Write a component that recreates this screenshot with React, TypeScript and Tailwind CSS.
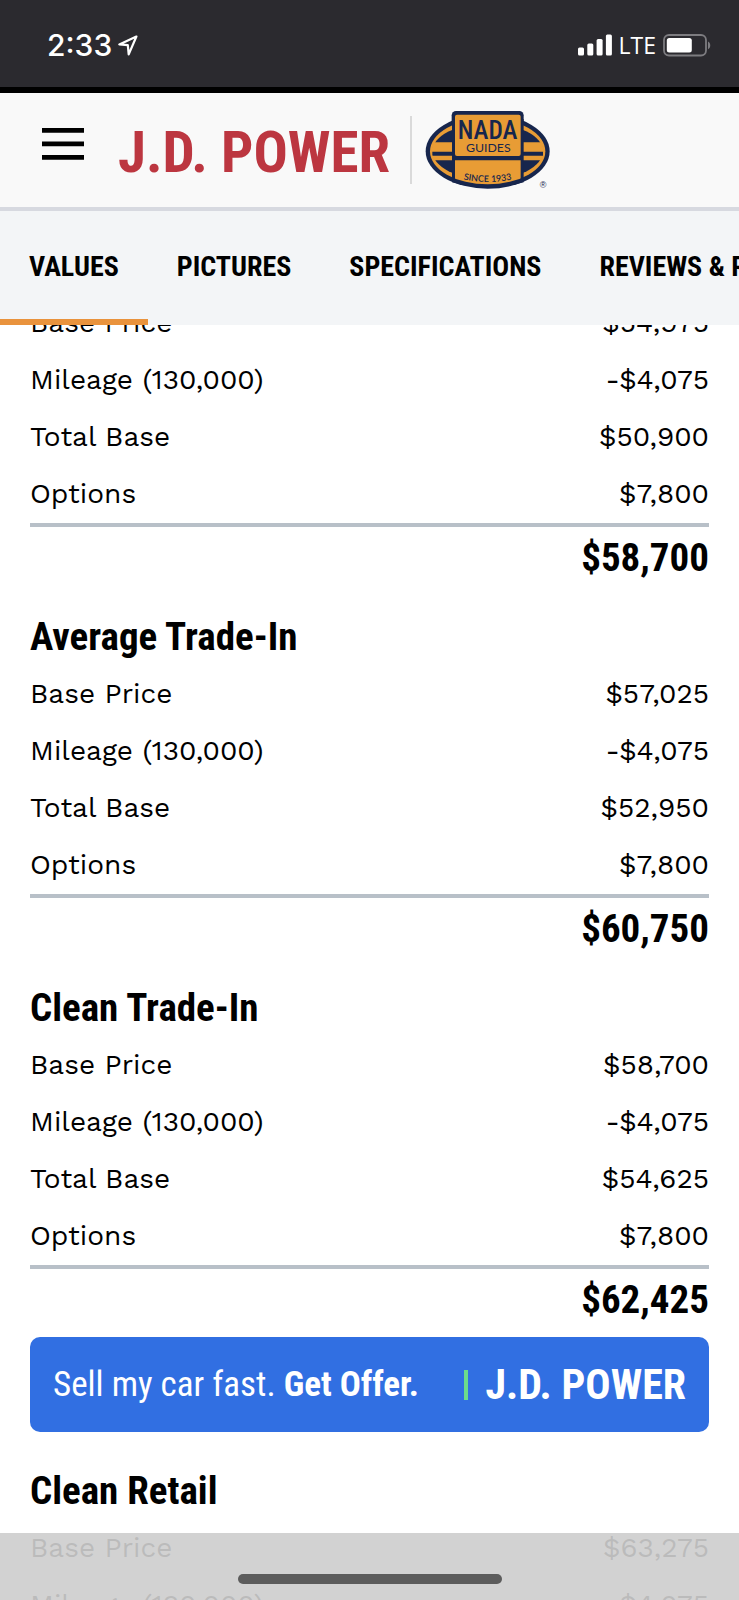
type Item = [label: string, value: string];
type Group = { title: string; items: Item[]; total: string };

const rough: Group = {
  title: '',
  items: [['Base Price', '$54,975'], ['Mileage (130,000)', '-$4,075'], ['Total Base', '$50,900'], ['Options', '$7,800']],
  total: '$58,700',
};
const average: Group = {
  title: 'Average Trade-In',
  items: [['Base Price', '$57,025'], ['Mileage (130,000)', '-$4,075'], ['Total Base', '$52,950'], ['Options', '$7,800']],
  total: '$60,750',
};
const clean: Group = {
  title: 'Clean Trade-In',
  items: [['Base Price', '$58,700'], ['Mileage (130,000)', '-$4,075'], ['Total Base', '$54,625'], ['Options', '$7,800']],
  total: '$62,425',
};
const retail: Group = {
  title: 'Clean Retail',
  items: [['Base Price', '$63,275'], ['Mileage (130,000)', '-$4,075']],
  total: '',
};

function StatusBar() {
  return (
    <div className="flex h-[93px] shrink-0 items-center justify-between border-b-6 border-black bg-[#2b2a2f] pr-[28px] pl-[47px] pt-[3px] text-white">
      <div className="flex items-center gap-[6px]">
        <span className="font-[Inter,sans-serif] text-[30px] leading-none font-medium">2:33</span>
        <svg width="20" height="21" viewBox="0 0 20 21" fill="none" stroke="#fff" strokeWidth="2.2" strokeLinejoin="round">
          <path d="M18.4 1.500 1.300 9.400l8.500.7.900 9.300z" />
        </svg>
      </div>
      <div className="flex items-center gap-[7px]">
        <svg width="34" height="22" viewBox="0 0 34 22" fill="#fff">
          <rect x="0" y="13.500" width="6" height="8" rx="1.500" />
          <rect x="9.300" y="9.500" width="6" height="12" rx="1.500" />
          <rect x="18.600" y="5" width="6" height="16.500" rx="1.500" />
          <rect x="27.900" y="0.500" width="6" height="21" rx="1.500" />
        </svg>
        <span className='font-["Open_Sans",sans-serif] text-[23px] leading-none font-medium'>LTE</span>
        <svg width="48" height="23" viewBox="0 0 48 23">
          <rect x="1" y="1" width="42" height="20.500" rx="5" fill="none" stroke="#7d7c80" strokeWidth="1.800" />
          <rect x="3.800" y="4" width="25" height="14.500" rx="2.500" fill="#fff" />
          <path d="M45 7.500c3 1.200 3 6.500 0 7.700z" fill="#7d7c80" />
        </svg>
      </div>
    </div>
  );
}

function NadaBadge() {
  return (
    <svg width="128" height="82" viewBox="100 60 384 246" role="img" aria-label="NADA Guides, since 1933">
      <defs>
        <clipPath id="inner"><ellipse cx="291" cy="187" rx="173" ry="99" /></clipPath>
        <clipPath id="band"><ellipse cx="291" cy="187" rx="168" ry="94" /></clipPath>
        <path id="arc" d="M208 269q83 20 166 0" />
      </defs>
      <g fill="#17264d">
        <ellipse cx="291" cy="187" rx="186" ry="112" />
        <rect x="183" y="66" width="216" height="130" rx="13" />
      </g>
      <ellipse cx="291" cy="187" rx="173" ry="99" fill="#e89c35" />
      <ellipse cx="291" cy="187" rx="166" ry="84" fill="#17264d" clipPath="url(#inner)" />
      <g clipPath="url(#band)">
        <path d="M110 160h370v54H110z" fill="#e89c35" />
        <path d="M125 188h332v12H125z" fill="#17264d" />
      </g>
      <path d="M184 90h215v190q-108 30-215 0z" fill="#17264d" />
      <rect x="193" y="77" width="197" height="124" rx="6" fill="#e89c35" />
      <path d="M193 214h197v100H193z" fill="#e89c35" clipPath="url(#inner)" />
      <g fill="#17264d" textAnchor="middle">
        <text x="291" y="149" fontSize="76" fontWeight="500" fontFamily="'Roboto Condensed','Liberation Sans Narrow'">NADA</text>
        <text x="293" y="189" fontSize="37" fontFamily="Lato">GUIDES</text>
        <text fontSize="27" fontWeight="600" fontFamily="Lato"><textPath href="#arc" startOffset="50%">SINCE 1933</textPath></text>
        <text x="457" y="298" fontSize="27" fontFamily="Liberation Sans">®</text>
      </g>
    </svg>
  );
}

function Header() {
  return (
    <header className="flex h-[118px] shrink-0 items-center border-b-4 border-[#d7d9e0] bg-[#f9f9f9] pl-[42px]">
      <button type="button" aria-label="Menu" className="mb-3">
        <svg width="42" height="32" viewBox="0 0 42 32"><path d="M0 0h42v4.700H0zM0 13.500h42v4.700H0zM0 27h42v4.700H0z" /></svg>
      </button>
      <a href="#home" aria-label="J.D. Power" className='ml-[34px] pt-1 font-["Roboto_Condensed",Roboto,sans-serif] text-[57px] leading-none font-bold whitespace-nowrap text-[#bc3640]'>J.D. POWER</a>
      <div className="ml-[20px] h-[68px] w-[2px] bg-[#dadada]" />
      <a href="#nada" className="ml-[12px]"><NadaBadge /></a>
    </header>
  );
}

function Tabs() {
  const tabs = ['VALUES', 'PICTURES', 'SPECIFICATIONS', 'REVIEWS & RATINGS'];
  return (
    <nav className='flex h-[114px] shrink-0 overflow-hidden bg-[#f3f5f7] font-["Roboto_Condensed",Roboto,sans-serif] text-[28px] font-bold text-black'>
      {tabs.map((t, i) => (
        <a key={t} href={`#tab-${i}`} className={`flex shrink-0 items-center border-b-6 px-[29px] pt-[4px] whitespace-nowrap ${i === 0 ? 'border-[#e9933d]' : 'border-transparent'}`}>{t}</a>
      ))}
    </nav>
  );
}

function ValueGroup({ group }: { group: Group }) {
  return (
    <section>
      {group.title && <h2 className='flex h-[60px] items-center pt-[2px] font-["Roboto_Condensed",Roboto,sans-serif] text-[39px] leading-none font-bold'>{group.title}</h2>}
      <table className="w-full border-collapse">
        <tbody className='font-["Work_Sans","Noto_Sans",sans-serif] text-[28px] leading-none'>
          {group.items.map(([label, value]) => (
            <tr key={label} className="h-[57px]">
              <th scope="row" className="p-0 pb-px text-left font-normal">{label}</th>
              <td className="p-0 pb-px text-right">{value}</td>
            </tr>
          ))}
        </tbody>
      </table>
      {group.total && <p className='flex h-[62px] items-center justify-end border-t-4 border-[#b8c0c8] pt-[4px] font-["Roboto_Condensed",Roboto,sans-serif] text-[39px] leading-none font-bold'>{group.total}</p>}
    </section>
  );
}

export default function App() {
  return (
    <div className="relative flex h-screen flex-col overflow-hidden bg-white text-black">
      <StatusBar />
      <Header />
      <Tabs />
      <main className="min-h-0 flex-1 overflow-hidden px-[30px]">
        <div className="-mt-[30px] flex flex-col gap-[21px]">
          <ValueGroup group={rough} />
          <ValueGroup group={average} />
          <ValueGroup group={clean} />
        </div>
        <a href="#offer" className='mt-[10px] mb-[28px] flex h-[95px] items-center justify-between rounded-[10px] bg-[#316fe2] px-[23px] font-["Roboto_Condensed",Roboto,sans-serif] text-[35px] leading-none whitespace-nowrap text-white'>
          <span>Sell my car fast. <b>Get Offer.</b></span>
          <span className="flex items-center gap-[18px]">
            <span className="h-[30px] w-[4px] bg-[#6bdc8b]" />
            <span className="text-[42px] font-bold">J.D. POWER</span>
          </span>
        </a>
        <ValueGroup group={retail} />
      </main>
      <div className="absolute inset-x-0 bottom-0 z-20 flex h-[67px] items-end justify-center bg-[#cdcdcd]/91 pb-[16px]">
        <div className="h-[10px] w-[264px] rounded-full bg-[#5c5c5c]" />
      </div>
    </div>
  );
}
